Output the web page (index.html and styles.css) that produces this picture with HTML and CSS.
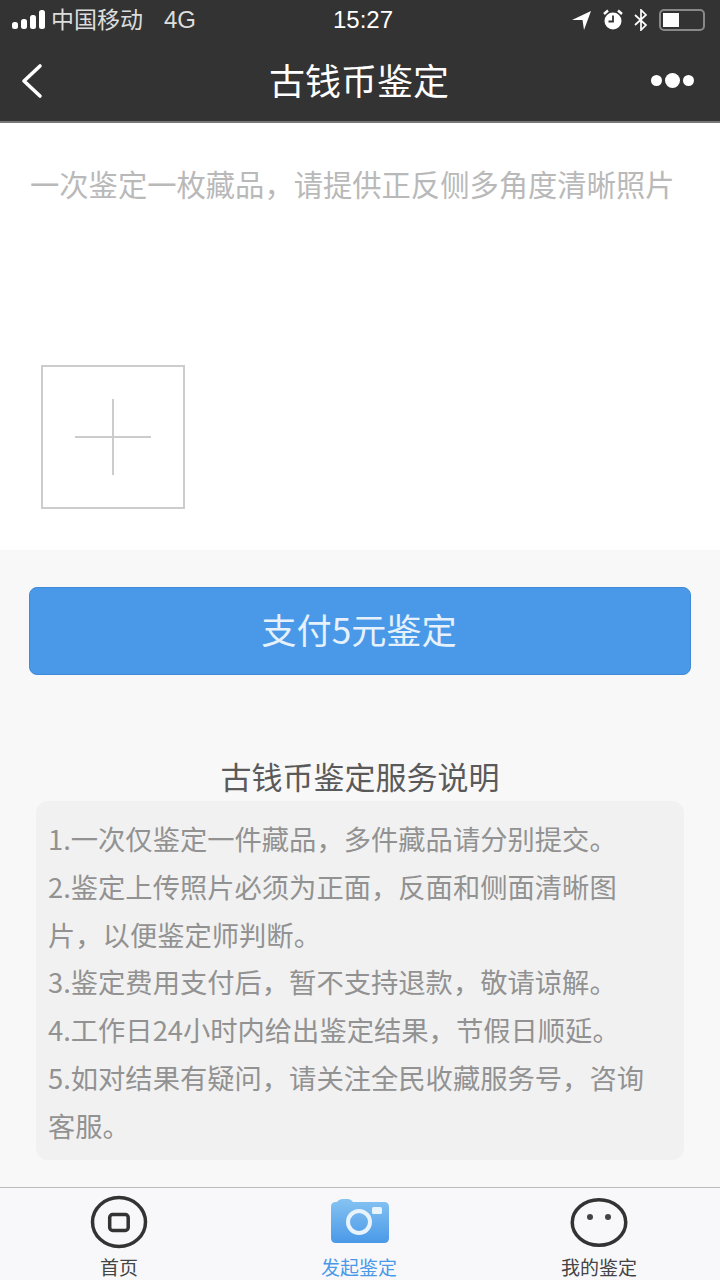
FILE: index.html
```html
<!DOCTYPE html>
<html lang="zh-CN">
<head>
    <meta charset="UTF-8">
    <meta name="viewport" content="width=device-width, initial-scale=1.0">
    <title>古钱币鉴定</title>
    <link rel="stylesheet" href="styles.css">
</head>
<body>
    <div class="app">
        <header class="header">
            <div class="status-bar">
                <div class="status-left">
                    <svg class="signal" width="34" height="20" viewBox="0 0 34 20">
                        <rect x="0" y="12" width="6" height="7" rx="2.5" fill="#fff"/>
                        <rect x="9" y="9" width="6" height="10" rx="2.5" fill="#fff"/>
                        <rect x="18" y="5" width="6" height="14" rx="2.5" fill="#fff"/>
                        <rect x="27" y="0" width="6" height="19" rx="2.5" fill="#fff"/>
                    </svg>
                    <span class="carrier">中国移动</span>
                    <span class="network">4G</span>
                </div>
                <div class="status-time">15:27</div>
                <div class="status-right">
                    <svg width="20" height="20" viewBox="0 0 20 20"><path d="M0 10 L19 1 L12 20 L10.5 10 Z" fill="#fff"/></svg>
                    <svg width="20" height="22" viewBox="0 0 20 22">
                        <circle cx="10" cy="12" r="8.5" fill="#fff"/>
                        <path d="M10 6.5 V12.5 H5.5" fill="none" stroke="#333" stroke-width="1.8"/>
                        <path d="M1 5 L5 1.5 M19 5 L15 1.5" stroke="#fff" stroke-width="2.4"/>
                    </svg>
                    <svg width="14" height="22" viewBox="0 0 14 22"><path d="M1 6 L12 16 L7 21 V1 L12 6 L1 16" fill="none" stroke="#fff" stroke-width="1.7"/></svg>
                    <div class="battery"><div class="battery-level"></div></div>
                </div>
            </div>
            <div class="nav-bar">
                <svg class="back" width="24" height="36" viewBox="0 0 24 36"><path d="M21 3 L5 18 L21 33" fill="none" stroke="#fff" stroke-width="3.6" stroke-linecap="round" stroke-linejoin="round"/></svg>
                <h1 class="nav-title">古钱币鉴定</h1>
                <div class="more"><i></i><i class="big"></i><i></i></div>
            </div>
        </header>

        <section class="upload-panel">
            <p class="hint">一次鉴定一枚藏品，请提供正反侧多角度清晰照片</p>
            <div class="add-photo"><span class="plus"></span></div>
        </section>

        <main class="content">
            <a href="#" class="pay-button">支付5元鉴定</a>
            <h2 class="notes-title">古钱币鉴定服务说明</h2>
            <div class="notes">
                <p>1.一次仅鉴定一件藏品，多件藏品请分别提交。</p>
                <p>2.鉴定上传照片必须为正面，反面和侧面清晰图片，以便鉴定师判断。</p>
                <p>3.鉴定费用支付后，暂不支持退款，敬请谅解。</p>
                <p>4.工作日24小时内给出鉴定结果，节假日顺延。</p>
                <p>5.如对结果有疑问，请关注全民收藏服务号，咨询客服。</p>
            </div>
        </main>

        <nav class="tab-bar">
            <a href="#" class="tab">
                <svg width="60" height="54" viewBox="0 0 60 54">
                    <ellipse cx="30" cy="27" rx="26.5" ry="24.5" fill="none" stroke="#333" stroke-width="3.5"/>
                    <rect x="20.7" y="19.5" width="18.5" height="16" rx="3" fill="none" stroke="#333" stroke-width="3.5"/>
                </svg>
                <span>首页</span>
            </a>
            <a href="#" class="tab active">
                <svg width="60" height="54" viewBox="0 0 60 54">
                    <defs>
                        <linearGradient id="cam" x1="0" y1="0" x2="0" y2="1">
                            <stop offset="0" stop-color="#86c3f2"/>
                            <stop offset="1" stop-color="#4a99e8"/>
                        </linearGradient>
                    </defs>
                    <path d="M1 12 Q1 7 6 7 H7 Q9 4 13 4 H18 Q21 4 23 7 H54 Q59 7 59 12 V43 Q59 48 54 48 H6 Q1 48 1 43 Z" fill="url(#cam)"/>
                    <circle cx="29" cy="27" r="11" fill="none" stroke="#e8f3fc" stroke-width="4"/>
                    <rect x="42" y="12" width="10" height="7" rx="1.5" fill="#e8f3fc"/>
                </svg>
                <span>发起鉴定</span>
            </a>
            <a href="#" class="tab">
                <svg width="60" height="54" viewBox="0 0 60 54">
                    <ellipse cx="30" cy="27.5" rx="26.75" ry="22.75" fill="none" stroke="#333" stroke-width="3.5"/>
                    <circle cx="21" cy="22" r="3" fill="#444"/>
                    <circle cx="39" cy="22" r="3" fill="#444"/>
                </svg>
                <span>我的鉴定</span>
            </a>
        </nav>
    </div>
</body>
</html>
```

FILE: styles.css
```css
* {
    box-sizing: border-box;
}
html, body {
    margin: 0;
    padding: 0;
}
body {
    font-family: "Noto Sans CJK SC", "Liberation Sans", sans-serif;
    background-color: #f8f8f8;
}
.app {
    width: 720px;
    height: 1280px;
    display: flex;
    flex-direction: column;
    overflow: hidden;
}

/* header */
.header {
    height: 123px;
    background-color: #333333;
    border-bottom: 2px solid #777;
    color: white;
}
.status-bar {
    height: 40px;
    padding: 0 15px 0 12px;
    display: flex;
    align-items: center;
    justify-content: space-between;
    position: relative;
}
.status-left {
    display: flex;
    align-items: center;
    font-size: 23px;
    color: #ddd;
}
.carrier {
    margin-left: 5px;
    margin-bottom: 4px;
}
.network {
    margin-left: 21px;
    font-family: "Liberation Sans", sans-serif;
    font-size: 24px;
}
.status-time {
    position: absolute;
    left: 333px;
    font-family: "Liberation Sans", sans-serif;
    font-size: 24px;
}
.status-right {
    display: flex;
    align-items: center;
    gap: 11px;
}
.battery {
    width: 46px;
    height: 22px;
    border: 2px solid #888;
    border-radius: 5px;
    padding: 2px;
}
.battery-level {
    width: 16px;
    height: 14px;
    background-color: white;
}
.nav-bar {
    height: 81px;
    padding: 0 26px 0 19px;
    display: flex;
    align-items: center;
    justify-content: space-between;
    position: relative;
}
.nav-title {
    position: absolute;
    left: 0;
    right: 2px;
    margin: 0 0 4px;
    text-align: center;
    font-size: 36px;
    font-weight: 400;
    line-height: 44px;
}
.more {
    display: flex;
    align-items: center;
    gap: 3px;
}
.more i {
    width: 11px;
    height: 11px;
    border-radius: 50%;
    background-color: white;
}
.more i.big {
    width: 15px;
    height: 15px;
}

/* upload */
.upload-panel {
    height: 427px;
    background-color: white;
    padding: 38px 0 0 30px;
}
.hint {
    margin: 0;
    font-size: 29.3px;
    line-height: 44px;
    color: #b9b9b9;
    white-space: nowrap;
}
.add-photo {
    width: 144px;
    height: 144px;
    margin: 160px 0 0 11px;
    border: 2px solid #ccc;
    display: flex;
    align-items: center;
    justify-content: center;
}
.plus {
    width: 76px;
    height: 76px;
    position: relative;
}
.plus::before, .plus::after {
    content: "";
    position: absolute;
    background-color: #ccc;
}
.plus::before {
    left: 0;
    right: 0;
    top: 37px;
    height: 2px;
}
.plus::after {
    top: 0;
    bottom: 0;
    left: 37px;
    width: 2px;
}

/* content */
.content {
    flex: 1;
    padding: 37px 29px 0;
}
.pay-button {
    display: block;
    height: 88px;
    line-height: 82px;
    text-align: center;
    background-color: #4a99e9;
    border: 1px solid #3f8bd8;
    border-radius: 8px;
    color: #e6f1fb;
    font-size: 35.2px;
    text-decoration: none;
    padding-right: 2px;
}
.notes-title {
    margin: 79px 0 0;
    text-align: center;
    font-size: 31px;
    font-weight: 400;
    line-height: 44px;
    color: #5a5a5a;
}
.notes {
    margin: 3px 7px 0;
    padding: 14px 30px 10px 12px;
    background-color: #f1f1f1;
    border-radius: 12px;
    font-size: 27.3px;
    line-height: 47.8px;
    color: #929292;
}
.notes p {
    margin: 0;
}

/* tabs */
.tab-bar {
    height: 93px;
    border-top: 1px solid #bbb;
    background-color: #f8f8fa;
    display: grid;
    grid-template-columns: 238px 244px 234px;
}
.tab {
    display: flex;
    flex-direction: column;
    align-items: center;
    padding-top: 7px;
    color: #444;
    font-size: 19px;
    line-height: 24px;
    text-decoration: none;
}
.tab svg {
    display: block;
}
.tab span {
    margin-top: 6px;
    white-space: nowrap;
}
.tab.active {
    color: #4a99e9;
}
.tab.active span {
    margin-right: 2px;
}
```
